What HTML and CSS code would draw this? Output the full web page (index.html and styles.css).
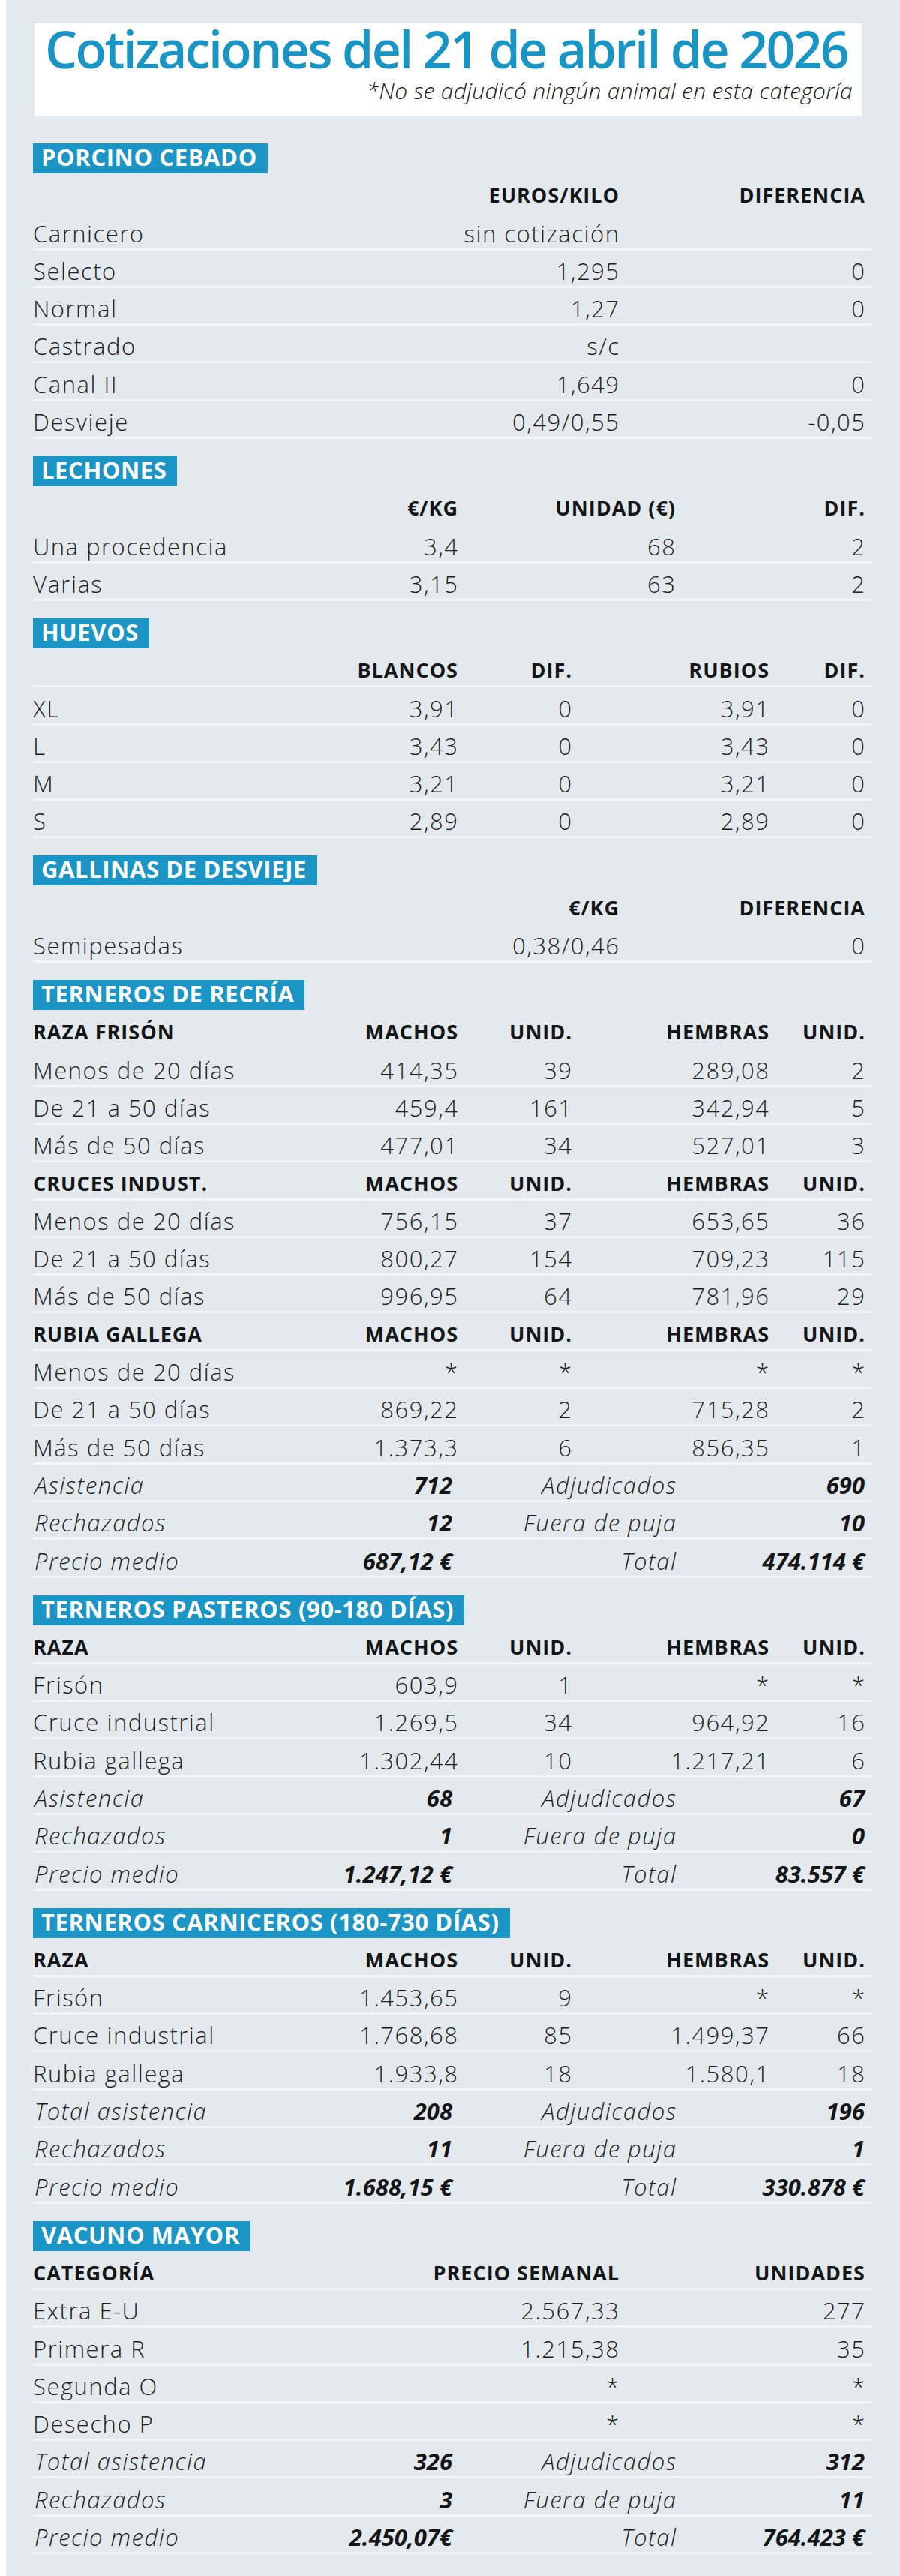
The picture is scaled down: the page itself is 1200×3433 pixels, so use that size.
FILE: index.html
```html
<!DOCTYPE html>
<html lang="es">
<head>
<meta charset="utf-8">
<title>Cotizaciones del 21 de abril de 2026</title>
<link rel="stylesheet" href="styles.css">
</head>
<body>
<main class="board">
  <header class="heading">
    <h1 class="heading__title">Cotizaciones del 21 de abril de 2026</h1>
    <p class="heading__note">*No se adjudicó ningún animal en esta categoría</p>
  </header>

  <section class="market market--first">
    <h2 class="market__bar">PORCINO CEBADO</h2>
    <div class="row row--c3 row--head row--noline"><span></span><span class="num">EUROS/KILO</span><span class="num">DIFERENCIA</span></div>
    <div class="row row--c3"><span>Carnicero</span><span class="num">sin cotización</span><span class="num"></span></div>
    <div class="row row--c3"><span>Selecto</span><span class="num">1,295</span><span class="num">0</span></div>
    <div class="row row--c3"><span>Normal</span><span class="num">1,27</span><span class="num">0</span></div>
    <div class="row row--c3"><span>Castrado</span><span class="num">s/c</span><span class="num"></span></div>
    <div class="row row--c3"><span>Canal II</span><span class="num">1,649</span><span class="num">0</span></div>
    <div class="row row--c3"><span>Desvieje</span><span class="num">0,49/0,55</span><span class="num">-0,05</span></div>
  </section>

  <section class="market">
    <h2 class="market__bar">LECHONES</h2>
    <div class="row row--c4 row--head row--noline"><span></span><span class="num">€/KG</span><span class="num">UNIDAD (€)</span><span class="num">DIF.</span></div>
    <div class="row row--c4"><span>Una procedencia</span><span class="num">3,4</span><span class="num">68</span><span class="num">2</span></div>
    <div class="row row--c4"><span>Varias</span><span class="num">3,15</span><span class="num">63</span><span class="num">2</span></div>
  </section>

  <section class="market">
    <h2 class="market__bar">HUEVOS</h2>
    <div class="row row--c5 row--head"><span></span><span class="num">BLANCOS</span><span class="num">DIF.</span><span class="num">RUBIOS</span><span class="num">DIF.</span></div>
    <div class="row row--c5"><span>XL</span><span class="num">3,91</span><span class="num">0</span><span class="num">3,91</span><span class="num">0</span></div>
    <div class="row row--c5"><span>L</span><span class="num">3,43</span><span class="num">0</span><span class="num">3,43</span><span class="num">0</span></div>
    <div class="row row--c5"><span>M</span><span class="num">3,21</span><span class="num">0</span><span class="num">3,21</span><span class="num">0</span></div>
    <div class="row row--c5"><span>S</span><span class="num">2,89</span><span class="num">0</span><span class="num">2,89</span><span class="num">0</span></div>
  </section>

  <section class="market">
    <h2 class="market__bar">GALLINAS DE DESVIEJE</h2>
    <div class="row row--c3 row--head row--noline"><span></span><span class="num">€/KG</span><span class="num">DIFERENCIA</span></div>
    <div class="row row--c3"><span>Semipesadas</span><span class="num">0,38/0,46</span><span class="num">0</span></div>
  </section>

  <section class="market">
    <h2 class="market__bar">TERNEROS DE RECRÍA</h2>
    <div class="row row--c5 row--head row--noline"><span>RAZA FRISÓN</span><span class="num">MACHOS</span><span class="num">UNID.</span><span class="num">HEMBRAS</span><span class="num">UNID.</span></div>
    <div class="row row--c5"><span>Menos de 20 días</span><span class="num">414,35</span><span class="num">39</span><span class="num">289,08</span><span class="num">2</span></div>
    <div class="row row--c5"><span>De 21 a 50 días</span><span class="num">459,4</span><span class="num">161</span><span class="num">342,94</span><span class="num">5</span></div>
    <div class="row row--c5"><span>Más de 50 días</span><span class="num">477,01</span><span class="num">34</span><span class="num">527,01</span><span class="num">3</span></div>
    <div class="row row--c5 row--head"><span>CRUCES INDUST.</span><span class="num">MACHOS</span><span class="num">UNID.</span><span class="num">HEMBRAS</span><span class="num">UNID.</span></div>
    <div class="row row--c5"><span>Menos de 20 días</span><span class="num">756,15</span><span class="num">37</span><span class="num">653,65</span><span class="num">36</span></div>
    <div class="row row--c5"><span>De 21 a 50 días</span><span class="num">800,27</span><span class="num">154</span><span class="num">709,23</span><span class="num">115</span></div>
    <div class="row row--c5"><span>Más de 50 días</span><span class="num">996,95</span><span class="num">64</span><span class="num">781,96</span><span class="num">29</span></div>
    <div class="row row--c5 row--head"><span>RUBIA GALLEGA</span><span class="num">MACHOS</span><span class="num">UNID.</span><span class="num">HEMBRAS</span><span class="num">UNID.</span></div>
    <div class="row row--c5"><span>Menos de 20 días</span><span class="num">*</span><span class="num">*</span><span class="num">*</span><span class="num">*</span></div>
    <div class="row row--c5"><span>De 21 a 50 días</span><span class="num">869,22</span><span class="num">2</span><span class="num">715,28</span><span class="num">2</span></div>
    <div class="row row--c5"><span>Más de 50 días</span><span class="num">1.373,3</span><span class="num">6</span><span class="num">856,35</span><span class="num">1</span></div>
    <div class="row row--sum"><span>Asistencia</span><span class="num val">712</span><span class="num">Adjudicados</span><span class="num val">690</span></div>
    <div class="row row--sum"><span>Rechazados</span><span class="num val">12</span><span class="num">Fuera de puja</span><span class="num val">10</span></div>
    <div class="row row--sum"><span>Precio medio</span><span class="num val">687,12 €</span><span class="num">Total</span><span class="num val">474.114 €</span></div>
  </section>

  <section class="market">
    <h2 class="market__bar">TERNEROS PASTEROS (90-180 DÍAS)</h2>
    <div class="row row--c5 row--head"><span>RAZA</span><span class="num">MACHOS</span><span class="num">UNID.</span><span class="num">HEMBRAS</span><span class="num">UNID.</span></div>
    <div class="row row--c5"><span>Frisón</span><span class="num">603,9</span><span class="num">1</span><span class="num">*</span><span class="num">*</span></div>
    <div class="row row--c5"><span>Cruce industrial</span><span class="num">1.269,5</span><span class="num">34</span><span class="num">964,92</span><span class="num">16</span></div>
    <div class="row row--c5"><span>Rubia gallega</span><span class="num">1.302,44</span><span class="num">10</span><span class="num">1.217,21</span><span class="num">6</span></div>
    <div class="row row--sum"><span>Asistencia</span><span class="num val">68</span><span class="num">Adjudicados</span><span class="num val">67</span></div>
    <div class="row row--sum"><span>Rechazados</span><span class="num val">1</span><span class="num">Fuera de puja</span><span class="num val">0</span></div>
    <div class="row row--sum"><span>Precio medio</span><span class="num val">1.247,12 €</span><span class="num">Total</span><span class="num val">83.557 €</span></div>
  </section>

  <section class="market">
    <h2 class="market__bar">TERNEROS CARNICEROS (180-730 DÍAS)</h2>
    <div class="row row--c5 row--head"><span>RAZA</span><span class="num">MACHOS</span><span class="num">UNID.</span><span class="num">HEMBRAS</span><span class="num">UNID.</span></div>
    <div class="row row--c5"><span>Frisón</span><span class="num">1.453,65</span><span class="num">9</span><span class="num">*</span><span class="num">*</span></div>
    <div class="row row--c5"><span>Cruce industrial</span><span class="num">1.768,68</span><span class="num">85</span><span class="num">1.499,37</span><span class="num">66</span></div>
    <div class="row row--c5"><span>Rubia gallega</span><span class="num">1.933,8</span><span class="num">18</span><span class="num">1.580,1</span><span class="num">18</span></div>
    <div class="row row--sum"><span>Total asistencia</span><span class="num val">208</span><span class="num">Adjudicados</span><span class="num val">196</span></div>
    <div class="row row--sum"><span>Rechazados</span><span class="num val">11</span><span class="num">Fuera de puja</span><span class="num val">1</span></div>
    <div class="row row--sum"><span>Precio medio</span><span class="num val">1.688,15 €</span><span class="num">Total</span><span class="num val">330.878 €</span></div>
  </section>

  <section class="market">
    <h2 class="market__bar">VACUNO MAYOR</h2>
    <div class="row row--c3 row--head"><span>CATEGORÍA</span><span class="num">PRECIO SEMANAL</span><span class="num">UNIDADES</span></div>
    <div class="row row--c3"><span>Extra E-U</span><span class="num">2.567,33</span><span class="num">277</span></div>
    <div class="row row--c3"><span>Primera R</span><span class="num">1.215,38</span><span class="num">35</span></div>
    <div class="row row--c3"><span>Segunda O</span><span class="num">*</span><span class="num">*</span></div>
    <div class="row row--c3"><span>Desecho P</span><span class="num">*</span><span class="num">*</span></div>
    <div class="row row--sum"><span>Total asistencia</span><span class="num val">326</span><span class="num">Adjudicados</span><span class="num val">312</span></div>
    <div class="row row--sum"><span>Rechazados</span><span class="num val">3</span><span class="num">Fuera de puja</span><span class="num val">11</span></div>
    <div class="row row--sum"><span>Precio medio</span><span class="num val">2.450,07€</span><span class="num">Total</span><span class="num val">764.423 €</span></div>
  </section>
</main>
</body>
</html>
```
FILE: styles.css
```css
html, body {
  margin: 0;
  padding: 0;
  background: #fdfdfd;
}

body {
  font-family: "Open Sans", "Noto Sans", "DejaVu Sans", sans-serif;
  color: #1d1f20;
}

.board {
  margin-left: 8px;
  min-height: 3433px;
  box-sizing: border-box;
  background: #e3e9ec;
  padding: 31px 37px 29px 36px;
}

/* Title block */
.heading {
  box-sizing: border-box;
  width: 1103px;
  height: 124px;
  margin-left: 2px;
  padding: 3.6px 12px 0 14px;
  background: #ffffff;
}

.heading__title {
  margin: 0;
  font-size: 68px;
  font-weight: 600;
  line-height: 60px;
  letter-spacing: -2.6px;
  color: #1995c5;
  white-space: nowrap;
}

.heading__note {
  margin: 8.8px 0 0;
  text-align: right;
  font-size: 30px;
  font-style: italic;
  font-weight: 300;
  line-height: 36px;
  letter-spacing: 0.3px;
  color: #1a1a1a;
  white-space: nowrap;
}

/* Sections */
.market {
  margin-top: 23px;
}

.market--first {
  margin-top: 36px;
}

.market__bar {
  box-sizing: border-box;
  width: fit-content;
  height: 40px;
  margin: 0 0 2px;
  padding: 0 14px 4px 11px;
  background: #1b95c6;
  color: #ffffff;
  font-size: 31px;
  font-weight: 700;
  line-height: 36px;
  letter-spacing: 0.6px;
  white-space: nowrap;
}

/* Table rows */
.row {
  display: grid;
  box-sizing: border-box;
  height: 50.3px;
  padding: 9.3px 10px 0 0;
  border-bottom: 3px solid #f3f6f8;
  font-size: 31px;
  font-weight: 300;
  line-height: 36px;
  letter-spacing: 1.5px;
  white-space: nowrap;
}

.row--noline {
  border-bottom-color: transparent;
}

.row--c3 {
  grid-template-columns: 1fr 260px 328px;
}

.row--c4 {
  grid-template-columns: 1fr 200px 290px 253px;
}

.row--c5 {
  grid-template-columns: 1fr 150px 152px 263px 128px;
}

.row--sum {
  grid-template-columns: 1fr 200px 298px 252px;
  font-style: italic;
  padding-left: 2px;
}

.row--head {
  font-size: 27px;
  font-weight: 700;
  letter-spacing: 1px;
  color: #141516;
}

.num {
  text-align: right;
  margin-right: -1.5px;
}

.row--head .num {
  margin-right: -1px;
}

.row--sum .val {
  font-weight: 700;
  letter-spacing: 0;
  margin-right: 0;
  color: #141516;
}
```
